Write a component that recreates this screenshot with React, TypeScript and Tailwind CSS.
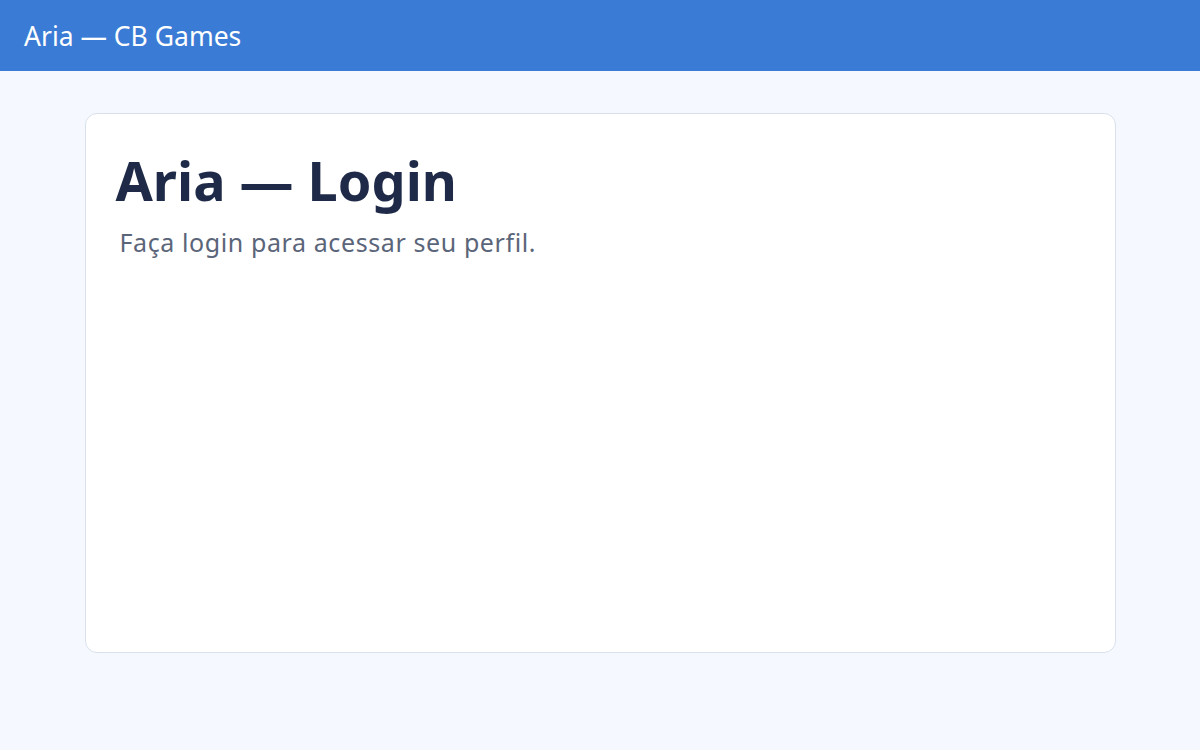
export default function App() {
  return (
    <div className="min-h-[750px] bg-[#f5f9ff]" style={{ fontFamily: '"Noto Sans", "Open Sans", sans-serif' }}>
      <header className="h-[71px] bg-[#3a7bd5] flex items-center px-6 pt-[3px]">
        <span className="text-white text-[26.5px]">Aria — CB Games</span>
      </header>
      <main className="pt-[42px]">
        <div className="mx-auto w-[1031px] h-[540px] bg-white border border-[#d9e1ec] rounded-[12px] px-[30px] pt-[33px]">
          <h1 className="text-[54px] font-bold text-[#1e2a47] leading-tight">Aria — Login</h1>
          <p className="text-[25px] tracking-[0.6px] text-[#5b6579] mt-[9px] ml-1">Faça login para acessar seu perfil.</p>
        </div>
      </main>
    </div>
  );
}
